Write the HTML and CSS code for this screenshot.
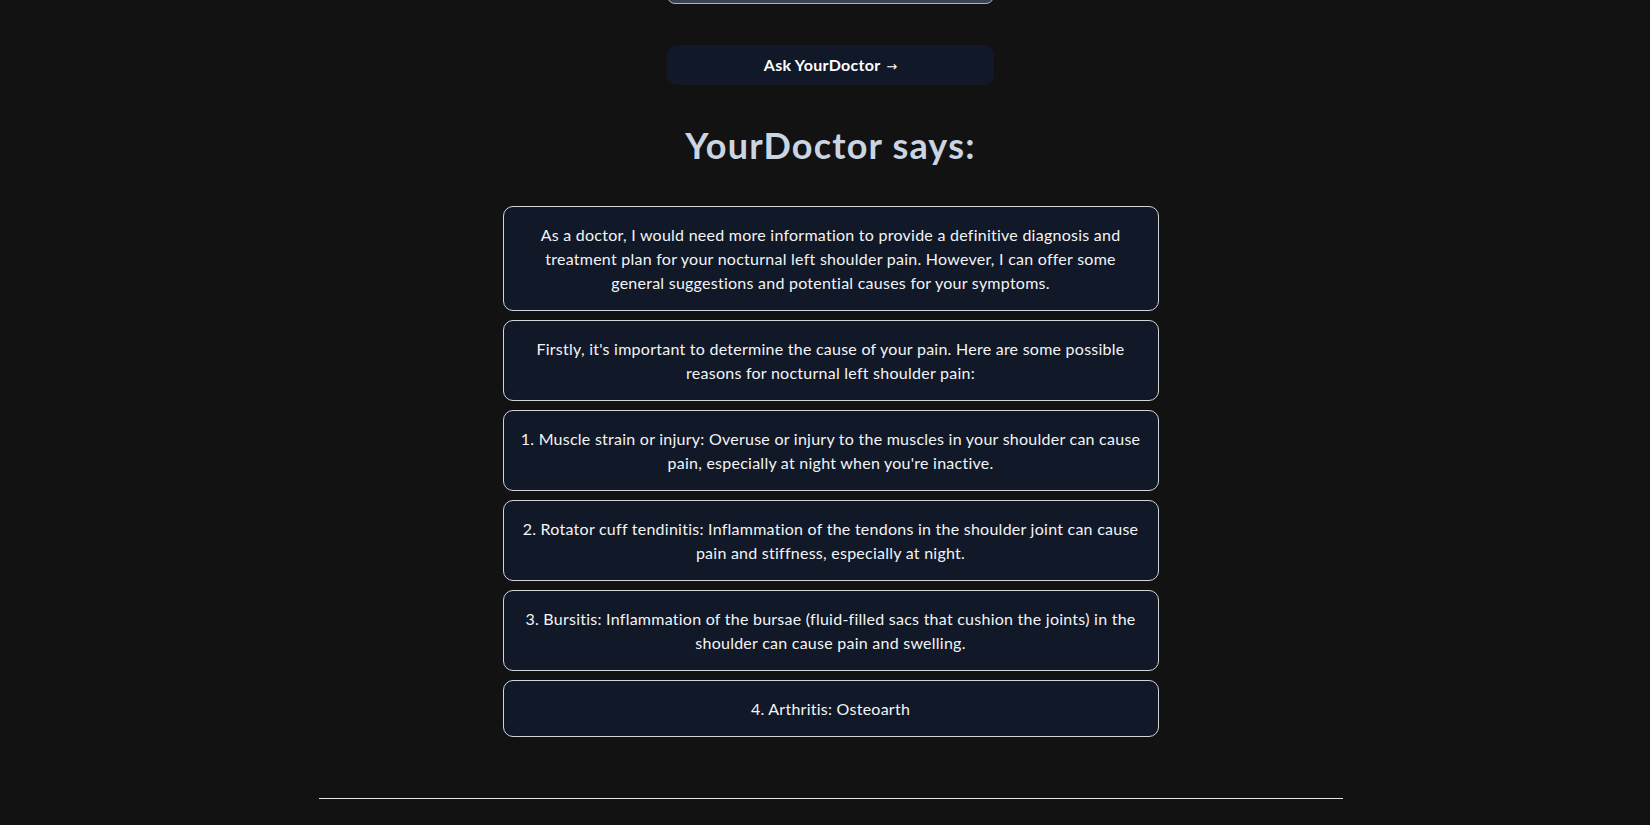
FILE: index.html
```html
<!DOCTYPE html>
<html lang="en">
<head>
  <meta charset="UTF-8" />
  <meta name="viewport" content="width=device-width, initial-scale=1" />
  <title>YourDoctor</title>
  <link rel="stylesheet" href="styles.css">
</head>
<body>
  <main class="page">
    <!-- Форма запитання -->
    <form class="ask-form" onsubmit="return false;">
      <textarea class="question" aria-label="Your question">I have pain in my left shoulder at night.</textarea>
      <button type="submit" class="btn-ask">Ask YourDoctor <span class="arrow">&rarr;</span></button>
    </form>

    <h2 class="answer-title">YourDoctor says:</h2>

    <!-- Відповідь по абзацах -->
    <section class="answer">
      <div class="answer-card">As a doctor, I would need more information to provide a definitive diagnosis and treatment plan for your nocturnal left shoulder pain. However, I can offer some general suggestions and potential causes for your symptoms.</div>
      <div class="answer-card">Firstly, it's important to determine the cause of your pain. Here are some possible reasons for nocturnal left shoulder pain:</div>
      <div class="answer-card">1. Muscle strain or injury: Overuse or injury to the muscles in your shoulder can cause pain, especially at night when you're inactive.</div>
      <div class="answer-card">2. Rotator cuff tendinitis: Inflammation of the tendons in the shoulder joint can cause pain and stiffness, especially at night.</div>
      <div class="answer-card">3. Bursitis: Inflammation of the bursae (fluid-filled sacs that cushion the joints) in the shoulder can cause pain and swelling.</div>
      <div class="answer-card">4. Arthritis: Osteoarth</div>
    </section>

    <hr class="divider" />
  </main>
</body>
</html>
```

FILE: styles.css
```css
/* Загальні стилі */
html, body {
  margin: 0;
  padding: 0;
  background-color: #121212;
  font-family: 'Lato', 'Open Sans', sans-serif;
  color: #f3f4f6;
  overflow: hidden;
}

.page {
  display: flex;
  flex-direction: column;
  align-items: center;
  padding-left: 11px;
}

/* Форма */
.ask-form {
  display: flex;
  flex-direction: column;
  align-items: center;
  gap: 41px;
  width: 327px;
  margin-top: -116px;
}
.question {
  box-sizing: border-box;
  width: 100%;
  height: 120px;
  background: #3b4353;
  border: 1px solid #aeb4be;
  border-radius: 8px;
  color: #e5e7eb;
  font-family: inherit;
  font-size: 1rem;
  padding: 0.5rem 0.75rem;
  resize: none;
}
.btn-ask {
  width: 100%;
  height: 40px;
  padding: 0 0 2px;
  background-color: #111827;
  color: #ffffff;
  border: none;
  border-radius: 10px;
  font-family: inherit;
  font-size: 16px;
  font-weight: 700;
  letter-spacing: 0.3px;
  cursor: pointer;
}
.btn-ask .arrow {
  margin-left: 2px;
  font-family: 'DejaVu Sans', sans-serif;
  font-size: 13px;
  font-weight: 400;
  letter-spacing: 0;
}

/* Заголовок */
.answer-title {
  margin: 40px 0 41px;
  font-size: 36px;
  line-height: 40px;
  font-weight: 700;
  letter-spacing: 1.2px;
  color: #cbd5e1;
}

/* Картки відповіді */
.answer {
  display: flex;
  flex-direction: column;
  gap: 9px;
  width: 656px;
}
.answer-card {
  background: #111827;
  border: 1px solid #d1d5db;
  border-radius: 10px;
  padding: 15.5px 16px;
  font-size: 16px;
  line-height: 24px;
  letter-spacing: 0.25px;
  text-align: center;
  color: #f3f4f6;
}

.divider {
  width: 1024px;
  margin: 61px 0 0;
  border: none;
  border-top: 1px solid #e5e7eb;
}
```
